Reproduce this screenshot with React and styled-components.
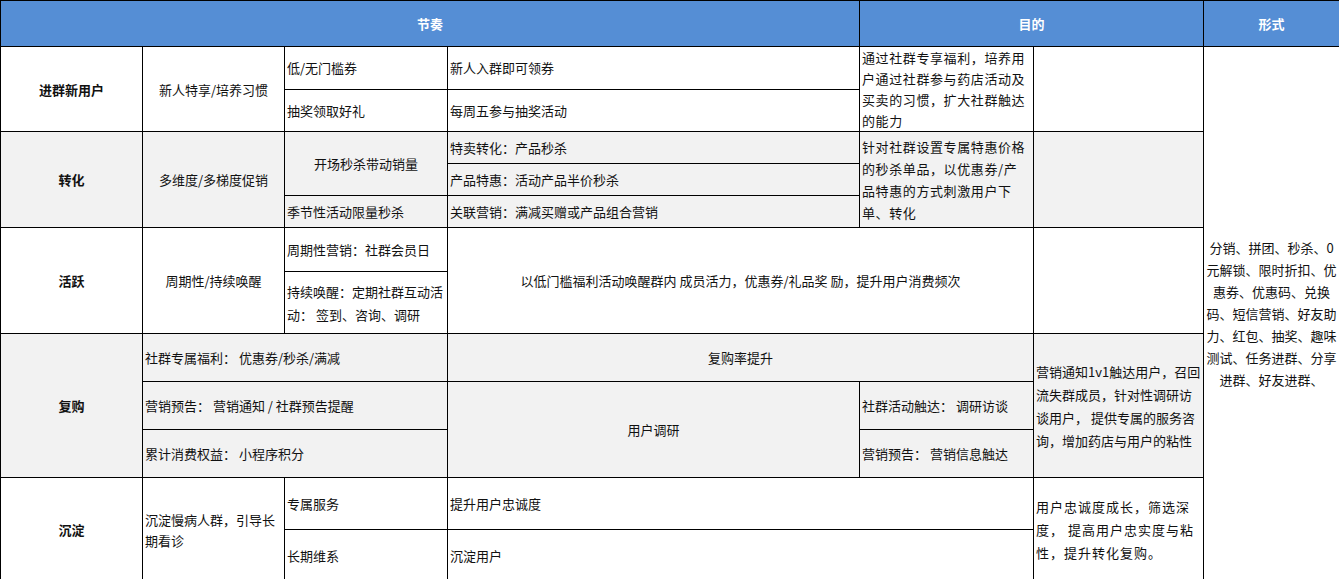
import React from "react";
import styled, { createGlobalStyle } from "styled-components";

const Global = createGlobalStyle`
  html, body { margin: 0; padding: 0; background: #fff; }
  body { font-family: "Noto Sans CJK SC", "Noto Sans", sans-serif; }
`;

const Table = styled.table`
  border-collapse: collapse;
  table-layout: fixed;
  width: 1339px;
  font-size: 13px;
  color: #111;
`;

const Row = styled.tr`
  height: ${(p) => p.h}px;
  background: ${(p) => (p.gray ? "#f2f2f2" : "#fff")};
`;

const Head = styled.th`
  background: #558ed5;
  color: #fff;
  font-weight: bold;
  font-size: 13px;
  border: 1px solid #000;
  height: 45px;
  padding: 0;
`;

const Cell = styled.td`
  border: 1px solid #000;
  padding: 0 2px;
  line-height: ${(p) => p.lh || 21}px;
  letter-spacing: ${(p) => p.ls || 0}px;
  vertical-align: middle;
  text-align: ${(p) => (p.center ? "center" : "left")};
  font-weight: ${(p) => (p.bold ? "bold" : "normal")};
  background: ${(p) => (p.white ? "#fff" : "inherit")};
  overflow: hidden;
  word-break: break-all;
`;

const widths = [142, 142, 163, 412, 174, 170, 136];

export default function App() {
  return (
    <>
      <Global />
      <Table>
        <colgroup>
          {widths.map((w, i) => (
            <col key={i} style={{ width: w }} />
          ))}
        </colgroup>
        <thead>
          <tr>
            <Head colSpan={4}>节奏</Head>
            <Head colSpan={2}>目的</Head>
            <Head>形式</Head>
          </tr>
        </thead>
        <tbody>
          <Row h={41}>
            <Cell rowSpan={2} center bold>进群新用户</Cell>
            <Cell rowSpan={2} center>新人特享/培养习惯</Cell>
            <Cell>低/无门槛券</Cell>
            <Cell>新人入群即可领券</Cell>
            <Cell rowSpan={2} ls={0.6}>通过社群专享福利，培养用户通过社群参与药店活动及买卖的习惯，扩大社群触达的能力</Cell>
            <Cell rowSpan={2} />
            <Cell rowSpan={12} center white lh={22}>分销、拼团、秒杀、0元解锁、限时折扣、优惠券、优惠码、兑换码、短信营销、好友助力、红包、抽奖、趣味测试、任务进群、分享进群、好友进群、</Cell>
          </Row>
          <Row h={41}>
            <Cell>抽奖领取好礼</Cell>
            <Cell>每周五参与抽奖活动</Cell>
          </Row>
          <Row h={32} gray>
            <Cell rowSpan={3} center bold>转化</Cell>
            <Cell rowSpan={3} center>多维度/多梯度促销</Cell>
            <Cell rowSpan={2} center>开场秒杀带动销量</Cell>
            <Cell>特卖转化：产品秒杀</Cell>
            <Cell rowSpan={3} lh={22} ls={0.6}>针对社群设置专属特惠价格的秒杀单品，以优惠券/产 品特惠的方式刺激用户下 单、转化</Cell>
            <Cell rowSpan={3} />
          </Row>
          <Row h={32} gray>
            <Cell>产品特惠：活动产品半价秒杀</Cell>
          </Row>
          <Row h={32} gray>
            <Cell>季节性活动限量秒杀</Cell>
            <Cell>关联营销：满减买赠或产品组合营销</Cell>
          </Row>
          <Row h={44}>
            <Cell rowSpan={2} center bold>活跃</Cell>
            <Cell rowSpan={2} center>周期性/持续唤醒</Cell>
            <Cell>周期性营销：社群会员日</Cell>
            <Cell colSpan={2} rowSpan={2} center>以低门槛福利活动唤醒群内 成员活力，优惠券/礼品奖 励，提升用户消费频次</Cell>
            <Cell rowSpan={2} />
          </Row>
          <Row h={62}>
            <Cell lh={23}>持续唤醒：定期社群互动活动： 签到、咨询、调研</Cell>
          </Row>
          <Row h={48} gray>
            <Cell rowSpan={3} center bold>复购</Cell>
            <Cell colSpan={2}>社群专属福利： 优惠券/秒杀/满减</Cell>
            <Cell colSpan={2} center>复购率提升</Cell>
            <Cell rowSpan={3} lh={23}>营销通知1v1触达用户，召回流失群成员，针对性调研访谈用户， 提供专属的服务咨询，增加药店与用户的粘性</Cell>
          </Row>
          <Row h={48} gray>
            <Cell colSpan={2}>营销预告： 营销通知 / 社群预告提醒</Cell>
            <Cell rowSpan={2} center>用户调研</Cell>
            <Cell>社群活动触达： 调研访谈</Cell>
          </Row>
          <Row h={48} gray>
            <Cell colSpan={2}>累计消费权益： 小程序积分</Cell>
            <Cell>营销预告： 营销信息触达</Cell>
          </Row>
          <Row h={52}>
            <Cell rowSpan={2} center bold>沉淀</Cell>
            <Cell rowSpan={2}>沉淀慢病人群，引导长期看诊</Cell>
            <Cell>专属服务</Cell>
            <Cell colSpan={2}>提升用户忠诚度</Cell>
            <Cell rowSpan={2} lh={23} ls={1}>用户忠诚度成长，筛选深度， 提高用户忠实度与粘性，提升转化复购。</Cell>
          </Row>
          <Row h={52}>
            <Cell>长期维系</Cell>
            <Cell colSpan={2}>沉淀用户</Cell>
          </Row>
        </tbody>
      </Table>
    </>
  );
}
